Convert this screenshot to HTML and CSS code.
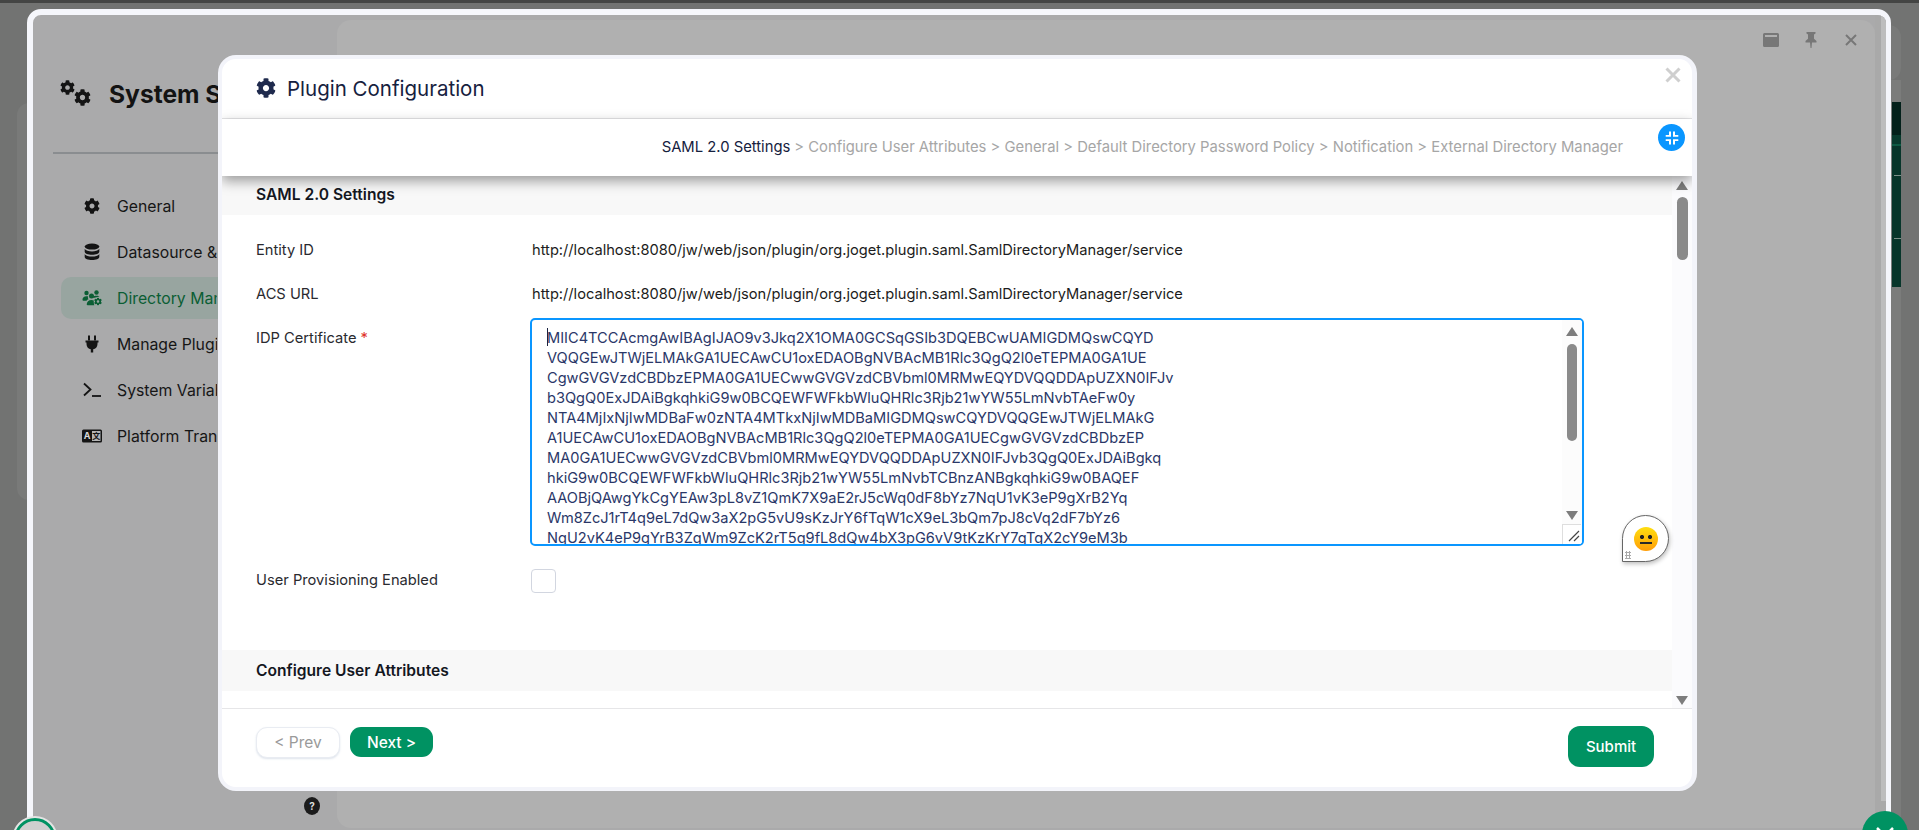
FILE: index.html
```html
<!DOCTYPE html>
<html lang="en">
<head>
<meta charset="utf-8">
<title>Plugin Configuration</title>
<link rel="stylesheet" href="styles.css">
</head>
<body>
<svg class="defs" width="0" height="0" aria-hidden="true">
  <symbol id="cog" viewBox="0 0 512 512"><path d="M487.4 315.7l-42.6-24.6c4.3-23.2 4.3-47 0-70.2l42.6-24.6c4.9-2.8 7.1-8.6 5.5-14-11.1-35.6-30-67.8-54.7-94.6-3.8-4.1-10-5.1-14.8-2.3L380.8 110c-17.9-15.4-38.5-27.3-60.8-35.1V25.8c0-5.6-3.9-10.5-9.4-11.7-36.7-8.2-74.3-7.8-109.2 0-5.5 1.2-9.4 6.1-9.4 11.7V75c-22.2 7.9-42.8 19.8-60.8 35.1L88.7 85.5c-4.9-2.8-11-1.9-14.8 2.3-24.7 26.7-43.6 58.9-54.7 94.6-1.7 5.4.6 11.2 5.5 14L67.3 221c-4.3 23.2-4.3 47 0 70.2l-42.6 24.6c-4.9 2.8-7.1 8.6-5.5 14 11.1 35.6 30 67.8 54.7 94.6 3.8 4.1 10 5.1 14.8 2.3l42.6-24.6c17.9 15.4 38.5 27.3 60.8 35.1v49.2c0 5.6 3.9 10.5 9.4 11.7 36.7 8.2 74.3 7.8 109.2 0 5.5-1.2 9.4-6.1 9.4-11.7v-49.2c22.2-7.9 42.8-19.8 60.8-35.1l42.6 24.6c4.9 2.8 11 1.9 14.8-2.3 24.7-26.7 43.6-58.9 54.7-94.6 1.5-5.5-.7-11.3-5.6-14.1zM256 336c-44.1 0-80-35.9-80-80s35.9-80 80-80 80 35.9 80 80-35.9 80-80 80z"/></symbol>
</svg>

<div class="topbar"></div>
<div class="desk-shape desk-shape-left"></div>
<div class="desk-shape desk-shape-right"></div>
<div class="desk-strip"></div>
<div class="desk-app"><span class="desk-dash desk-dash-a"></span><span class="desk-dash desk-dash-b"></span></div>

<main class="window">
  <aside class="sidebar">
    <div class="brand">
      <svg class="brand-icon" viewBox="0 0 32 28" fill="#141414">
        <use href="#cog" x="0" y="0" width="15" height="15"/>
        <use href="#cog" x="14" y="9" width="17" height="17"/>
      </svg>
      <span class="brand-name">System Settings</span>
    </div>
    <hr class="brand-rule">
    <nav class="nav">
      <a class="nav-item">
        <svg class="nav-icon" viewBox="0 0 20 20" fill="#141414"><use href="#cog" x="2" y="2" width="16" height="16"/></svg>
        <span>General</span>
      </a>
      <a class="nav-item">
        <svg class="nav-icon" viewBox="0 0 20 20" fill="#141414">
          <ellipse cx="10" cy="4.600" rx="7.300" ry="3"/>
          <path d="M2.700 6.800c1 1.900 4 2.700 7.300 2.700s6.300-.8 7.300-2.700v2.900c0 1.700-3.300 3-7.300 3s-7.300-1.300-7.300-3z"/>
          <path d="M2.700 11.900c1 1.900 4 2.700 7.300 2.700s6.300-.8 7.300-2.700v3c0 1.700-3.300 3-7.300 3s-7.300-1.300-7.300-3z"/>
        </svg>
        <span>Datasource &amp; Profile</span>
      </a>
      <a class="nav-item nav-item-active">
        <svg class="nav-icon" viewBox="0 0 20 20" fill="#0b5e34">
          <circle cx="4.500" cy="5" r="2.200"/><circle cx="14.500" cy="4.500" r="2.200"/><circle cx="9.500" cy="8" r="2.500"/>
          <path d="M.5 11.500c0-2 1.500-3.300 4-3.300 .7 0 1.200.1 1.600.3-.4 1-.1 2 .4 2.800-.9.300-1.500.800-2 1.500H1.500c-.6 0-1-.4-1-1.300z"/>
          <path d="M4.700 16.500c0-2.800 2-4.600 4.800-4.600 1 0 1.700.2 2.300.5-.2 1.300 0 3 .5 4.900H5.700c-.6 0-1-.300-1-.800z"/>
          <path d="M11 8.500c.6-.5 1.700-.700 3.500-.700 1.500 0 2.500.3 3 .8l-6 1.500z"/>
          <use href="#cog" x="12" y="9.500" width="8" height="8"/>
        </svg>
        <span>Directory Manager</span>
      </a>
      <a class="nav-item">
        <svg class="nav-icon" viewBox="0 0 20 20" fill="#141414">
          <path d="M6 1.500h2v5H6zM12 1.500h2v5h-2z"/>
          <path d="M3.500 6.500h13v2h-1v1.500c0 3-2 5-4.300 5.300v3.200H8.800v-3.200C6.500 15 4.500 13 4.500 10V8.500h-1z"/>
        </svg>
        <span>Manage Plugins</span>
      </a>
      <a class="nav-item">
        <svg class="nav-icon" viewBox="0 0 20 20" fill="none" stroke="#141414">
          <path d="M2 3.500l6.500 6-6.500 6" stroke-width="1.800"/>
          <path d="M10 16h9" stroke-width="1.800"/>
        </svg>
        <span>System Variables</span>
      </a>
      <a class="nav-item">
        <svg class="nav-icon" viewBox="0 0 20 20">
          <rect x="0" y="3.500" width="20" height="13" rx="1.500" fill="#141414"/>
          <rect x="10" y="5" width="8.500" height="10" fill="#b5b5b5"/>
          <text class="lang-a" x="5" y="13.300">A</text>
          <text class="lang-b" x="14.200" y="13">文</text>
        </svg>
        <span>Platform Translation</span>
      </a>
    </nav>
    <span class="help">?</span>
  </aside>
  <section class="panel">
    <div class="panel-tools">
      <svg class="tool" viewBox="0 0 18 18"><path fill="#777" d="M2.500 2h13A1.500 1.500 0 0 1 17 3.500v11a1.500 1.500 0 0 1-1.500 1.500h-13A1.500 1.500 0 0 1 1 14.500v-11A1.500 1.500 0 0 1 2.500 2zm.5 2v2h12V4z" fill-rule="evenodd"/></svg>
      <svg class="tool" viewBox="0 0 18 18"><path fill="#777" d="M4.500 1h9v1.500l-1.500 1v4.200l2.500 2.300v1.500H10l-.5 5.500h-1L8 11.500H3.500V10L6 7.700V3.500l-1.500-1z"/></svg>
      <svg class="tool" viewBox="0 0 18 18"><path d="M4 4l10 10M14 4L4 14" stroke="#777" stroke-width="2" fill="none"/></svg>
    </div>
  </section>
  <div class="window-gutter"><div class="window-thumb"></div></div>
</main>

<section class="modal">
  <header class="modal-head">
    <svg class="modal-icon" viewBox="0 0 20 20" fill="#1f2a4d"><use href="#cog" width="20" height="20"/></svg>
    <h1 class="modal-title">Plugin Configuration</h1>
    <svg class="modal-close" viewBox="0 0 16 16"><path d="M1.500 1.500l13 13M14.500 1.500l-13 13" stroke="#cfcfcf" stroke-width="3" fill="none"/></svg>
  </header>
  <div class="crumbs">
    <span class="crumb-on">SAML 2.0 Settings</span>
    <span>&gt; Configure User Attributes &gt; General &gt; Default Directory Password Policy &gt; Notification &gt; External Directory Manager</span>
    <span class="shrink-btn">
      <svg viewBox="0 0 16 16" fill="#fff"><path d="M5 1.500h2v5.300H1.700V5H5zM9 1.500h2V5h3.300v1.800H9zM1.700 9.200H7v5.300H5V11H1.700zM9 9.200h5.300V11H11v3.500H9z"/></svg>
    </span>
  </div>
  <div class="modal-body">
    <div class="form-scroll">
      <h2 class="section-head">SAML 2.0 Settings</h2>
      <div class="form">
        <div class="field">
          <label class="field-label">Entity ID</label>
          <div class="field-value">http://localhost:8080/jw/web/json/plugin/org.joget.plugin.saml.SamlDirectoryManager/service</div>
        </div>
        <div class="field">
          <label class="field-label">ACS URL</label>
          <div class="field-value">http://localhost:8080/jw/web/json/plugin/org.joget.plugin.saml.SamlDirectoryManager/service</div>
        </div>
        <div class="field field-cert">
          <label class="field-label">IDP Certificate <span class="req">*</span></label>
          <div class="cert">
            <span class="caret"></span>
            <pre class="cert-text">MIIC4TCCAcmgAwIBAgIJAO9v3Jkq2X1OMA0GCSqGSIb3DQEBCwUAMIGDMQswCQYD
VQQGEwJTWjELMAkGA1UECAwCU1oxEDAOBgNVBAcMB1Rlc3QgQ2l0eTEPMA0GA1UE
CgwGVGVzdCBDbzEPMA0GA1UECwwGVGVzdCBVbml0MRMwEQYDVQQDDApUZXN0IFJv
b3QgQ0ExJDAiBgkqhkiG9w0BCQEWFWFkbWluQHRlc3Rjb21wYW55LmNvbTAeFw0y
NTA4MjIxNjIwMDBaFw0zNTA4MTkxNjIwMDBaMIGDMQswCQYDVQQGEwJTWjELMAkG
A1UECAwCU1oxEDAOBgNVBAcMB1Rlc3QgQ2l0eTEPMA0GA1UECgwGVGVzdCBDbzEP
MA0GA1UECwwGVGVzdCBVbml0MRMwEQYDVQQDDApUZXN0IFJvb3QgQ0ExJDAiBgkq
hkiG9w0BCQEWFWFkbWluQHRlc3Rjb21wYW55LmNvbTCBnzANBgkqhkiG9w0BAQEF
AAOBjQAwgYkCgYEAw3pL8vZ1QmK7X9aE2rJ5cWq0dF8bYz7NqU1vK3eP9gXrB2Yq
Wm8ZcJ1rT4q9eL7dQw3aX2pG5vU9sKzJrY6fTqW1cX9eL3bQm7pJ8cVq2dF7bYz6
NqU2vK4eP9gYrB3ZqWm9ZcK2rT5q9fL8dQw4bX3pG6vV9tKzKrY7gTqX2cY9eM3b</pre>
            <div class="cert-bar">
              <span class="arrow-up"></span>
              <span class="cert-thumb"></span>
              <span class="arrow-down"></span>
              <span class="resizer">
                <svg viewBox="0 0 12 12"><path d="M1 11L11 1M6 11l5-5" stroke="#444" stroke-width="1.200" fill="none"/></svg>
              </span>
            </div>
          </div>
        </div>
        <div class="field field-check">
          <label class="field-label">User Provisioning Enabled</label>
          <span class="checkbox"></span>
        </div>
      </div>
      <h2 class="section-head section-head-next">Configure User Attributes</h2>
    </div>
    <div class="body-bar">
      <span class="arrow-up"></span>
      <span class="body-thumb"></span>
      <span class="arrow-down arrow-end"></span>
    </div>
    <div class="mood">
      <span class="mood-face"><span class="mood-eyes"></span><span class="mood-mouth"></span></span>
      <span class="mood-grip"></span>
    </div>
  </div>
  <footer class="modal-foot">
    <button class="btn btn-ghost">&lt; Prev</button>
    <button class="btn btn-green">Next &gt;</button>
    <button class="btn-submit">Submit</button>
  </footer>
</section>

<div class="launcher launcher-left"><span class="launcher-ring"></span></div>
<div class="launcher launcher-right">
  <svg viewBox="0 0 46 46"><path d="M15 17l8 8 8-8" stroke="#fff" stroke-width="2.500" fill="none"/></svg>
</div>
</body>
</html>
```

FILE: styles.css
```css
* { box-sizing: border-box; }
html, body { height: 100%; }
body {
  margin: 0;
  overflow: hidden;
  background: #727372;
  font-family: Inter, "Liberation Sans", sans-serif;
  font-size: 14px;
  color: #1a1a1a;
}
.defs { position: absolute; }

/* desktop behind the window */
.topbar { position: absolute; left: 0; right: 0; top: 0; height: 3px; background: #444544; }
.desk-shape { position: absolute; background: #797a79; }
.desk-shape-left { left: 17px; top: 103px; width: 20px; height: 397px; border-radius: 12px 0 0 12px; }
.desk-shape-right { left: 1880px; top: 25px; width: 21px; height: 55px; border-radius: 0 12px 12px 0; }
.desk-strip { position: absolute; left: 1891px; top: 80px; bottom: 0; width: 10px; background: #7b7c7b; }
.desk-app {
  position: absolute; left: 1892px; top: 102px; width: 9px; height: 185px;
  background: linear-gradient(#03201a 0 33px, #083a2d 33px 42px, #0e5a44 42px 44px, #07352a 44px);
}
.desk-dash { position: absolute; left: 2px; width: 7px; height: 1px; background: #7c8f88; }
.desk-dash-a { top: 73px; }
.desk-dash-b { top: 136px; }

/* window */
.window {
  position: absolute; left: 27px; top: 9px; width: 1864px; height: 830px;
  display: flex;
  border: 6px solid #f5f6fb; border-right-width: 5px;
  border-radius: 14px;
  background: #aaaaab;
  overflow: hidden;
}
.sidebar { position: relative; width: 304px; flex: none; }
.brand { display: flex; align-items: center; height: 93px; padding: 65px 0 0 27px; }
.brand-icon { width: 32px; height: 28px; flex: none; margin-right: 17px; }
.brand-name {
  width: 109px; overflow: hidden;
  font-size: 24.600px; font-weight: 700; color: #131313; white-space: nowrap;
}
.brand-rule { margin: 44px 0 0 20px; height: 2px; border: 0; background: #8a8d90; width: 200px; }
.nav { display: flex; flex-direction: column; gap: 4px; margin: 31px 0 0 28px; width: 220px; }
.nav-item {
  display: flex; align-items: center; height: 42px; padding-left: 21px;
  border-radius: 10px; white-space: nowrap; color: #161616; font-size: 15.800px;
}
.nav-item > span { margin-left: 15px; width: 100px; overflow: hidden; }
.nav-icon { width: 20px; height: 20px; flex: none; }
.nav-item-active { background: #98a5a0; color: #0b5e34; }
.lang-a { font: 700 9px Inter, sans-serif; fill: #d8d8d8; text-anchor: middle; }
.lang-b { font: 700 8px "Noto Sans CJK SC", sans-serif; fill: #141414; text-anchor: middle; }
.help {
  position: absolute; left: 271px; top: 782px; width: 16px; height: 18px; border-radius: 50%;
  background: #1b1b1b; color: #ddd; font-size: 10px; font-weight: 700; line-height: 18px; text-align: center;
}
.panel {
  flex: 1; margin: 5px 0 5px 0; border-radius: 14px; background: #b0b0b0;
  display: flex; justify-content: flex-end;
}
.panel-tools { display: flex; gap: 22px; padding: 11px 15px 0 0; height: 40px; }
.tool { width: 18px; height: 18px; }
.window-gutter { width: 11px; flex: none; background: #a9a9a9; }
.window-thumb { margin-left: 6px; width: 5px; height: 786px; background: #bdbdbd; }

/* modal */
.modal {
  position: absolute; left: 218px; top: 55px; width: 1479px; height: 736px;
  display: flex; flex-direction: column;
  background: #fff;
  border: 4px solid #f3f4fa; border-right-width: 5px;
  border-radius: 18px;
  overflow: hidden;
}
.modal-head {
  position: relative; flex: none; height: 60px; display: flex; align-items: center;
  padding: 0 0 1px 34px; border-bottom: 1px solid #e6e6e8;
}
.modal-icon { width: 20px; height: 20px; margin-right: 11px; }
.modal-title { margin: 0; font-size: 20.500px; font-weight: 400; color: #16213e; }
.modal-close { position: absolute; right: 11px; top: 8px; width: 16px; height: 16px; }
.crumbs {
  position: relative; z-index: 2; flex: none; height: 57px; display: flex; justify-content: flex-end; gap: 4px;
  align-items: flex-start; padding: 20px 69px 0 0;
  background: #fff; color: #a6a6a6; font-size: 14.800px; line-height: 17px; white-space: nowrap;
  box-shadow: 0 5px 12px rgba(0, 0, 0, .38);
}
.crumb-on { color: #16213e; }
.shrink-btn {
  position: absolute; right: 7px; top: 5px; width: 27px; height: 27px; border-radius: 50%;
  background: #0a96ff; display: flex; align-items: center; justify-content: center;
}
.shrink-btn svg { width: 16px; height: 16px; }
.modal-body { position: relative; flex: 1; min-height: 0; display: flex; overflow: hidden; }
.form-scroll { flex: 1; min-width: 0; overflow: hidden; }
.section-head {
  margin: 0; height: 39px; padding: 9px 0 0 34px;
  background: #f8f8f8; font-size: 15.600px; font-weight: 600; line-height: 20px; color: #14171f;
}
.section-head-next { height: 41px; padding-top: 11px; }
.form { display: flex; flex-direction: column; padding: 25px 0 0 34px; height: 435px; }
.field { display: flex; align-items: flex-start; margin-bottom: 24px; line-height: 20px; }
.field-label { width: 276px; flex: none; color: #2a2a2f; font-size: 14.700px; white-space: nowrap; }
.field-value { color: #1c1c20; font-size: 14.650px; white-space: nowrap; }
.req { color: #e0332d; }
.field-cert { margin-top: -10px; margin-bottom: 23px; }
.field-cert .field-label { padding-top: 10px; }
.field-check { margin: 0; }
.field-check .field-label { padding-top: 1px; }
.cert {
  position: relative; width: 1054px; height: 228px; margin-left: -2px;
  border: 2px solid #0a96ff; border-radius: 5px; overflow: hidden; background: #fff;
}
.cert-text {
  margin: 0; padding: 8px 0 0 15px; font-family: inherit; font-size: 14.600px; line-height: 20px; color: #2a3768;
}
.caret { position: absolute; left: 15px; top: 8px; width: 1px; height: 18px; background: #1a2340; }
.cert-bar {
  position: absolute; right: 0; top: 0; bottom: 0; width: 20px; background: #fcfcfc;
  display: flex; flex-direction: column; align-items: center; padding-top: 7px;
}
.arrow-up { width: 0; height: 0; border: 6px solid transparent; border-top: 0; border-bottom: 9px solid #7d7d7d; flex: none; }
.arrow-down { width: 0; height: 0; border: 6px solid transparent; border-bottom: 0; border-top: 9px solid #7d7d7d; flex: none; }
.cert-thumb { width: 10px; height: 97px; margin-top: 8px; border-radius: 5px; background: #8a8a8a; flex: none; }
.cert-bar .arrow-down { margin-top: 70px; }
.resizer {
  position: absolute; right: 1px; bottom: 0; width: 19px; height: 20px; background: #fff;
  border: 1px solid #dedede; border-bottom: 0; border-right: 0;
  display: flex; align-items: flex-end; justify-content: flex-end; padding: 0 1px 2px 0;
}
.resizer svg { width: 12px; height: 12px; }
.checkbox { width: 25px; height: 24px; margin-left: -1px; border: 1px solid #d2d6e0; border-radius: 4px; background: #fff; }
.body-bar {
  width: 20px; flex: none; background: #fbfbfd; display: flex; flex-direction: column; align-items: center; padding-top: 5px;
}
.body-thumb { width: 11px; height: 63px; margin-top: 7px; border-radius: 6px; background: #8a8a8a; }
.arrow-end { margin-top: auto; margin-bottom: 3px; }
.mood {
  position: absolute; left: 1400px; top: 339px; width: 47px; height: 47px;
  border: 1px solid #666; border-radius: 50% 50% 50% 0; background: #fff;
  box-shadow: 1px 2px 4px rgba(0, 0, 0, .25);
}
.mood-face {
  position: absolute; left: 11px; top: 11px; width: 24px; height: 24px; border-radius: 50%;
  background: linear-gradient(#ffdf10, #ff9d08);
}
.mood-eyes {
  position: absolute; left: 6px; top: 8px; width: 12px; height: 4px;
  background: radial-gradient(circle at 2px 2px, #222 2px, transparent 2.200px), radial-gradient(circle at 10px 2px, #222 2px, transparent 2.200px);
}
.mood-mouth { position: absolute; left: 6px; top: 15px; width: 12px; height: 2px; background: #2a2a2a; }
.mood-grip {
  position: absolute; left: 2px; bottom: 2px; width: 6px; height: 8px;
  background-image: radial-gradient(#aaa 1px, transparent 1.200px);
  background-size: 3px 3px;
}
.modal-foot {
  flex: none; height: 79px; display: flex; align-items: flex-start; gap: 10px;
  padding: 18px 38px 0 34px; border-top: 1px solid #e6e6e8;
}
.btn { width: 84px; height: 31px; border-radius: 11px; font: 15.500px Inter, sans-serif; padding: 0; }
.btn-ghost { background: #fff; border: 1px solid #e9ecf2; color: #9a9a9a; box-shadow: 0 1px 2px rgba(90, 120, 160, .2); }
.btn-green { width: 83px; height: 30px; background: #009262; border: 0; color: #fff; font-weight: 500; }
.btn-submit {
  margin: -1px 0 0 auto; width: 86px; height: 41px; border: 0; border-radius: 12px;
  background: #009262; color: #fff; font: 500 15px Inter, sans-serif;
}

/* floating launchers */
.launcher { position: absolute; width: 46px; height: 46px; border-radius: 50%; }
.launcher-left { left: 12px; top: 816px; background: #e4e4e4; padding: 2px; }
.launcher-ring { display: block; height: 100%; border: 3px solid #009262; border-radius: 50%; background: #cfcfcf; }
.launcher-right { left: 1862px; top: 811px; background: #009262; }
.launcher-right svg { display: block; }
```
